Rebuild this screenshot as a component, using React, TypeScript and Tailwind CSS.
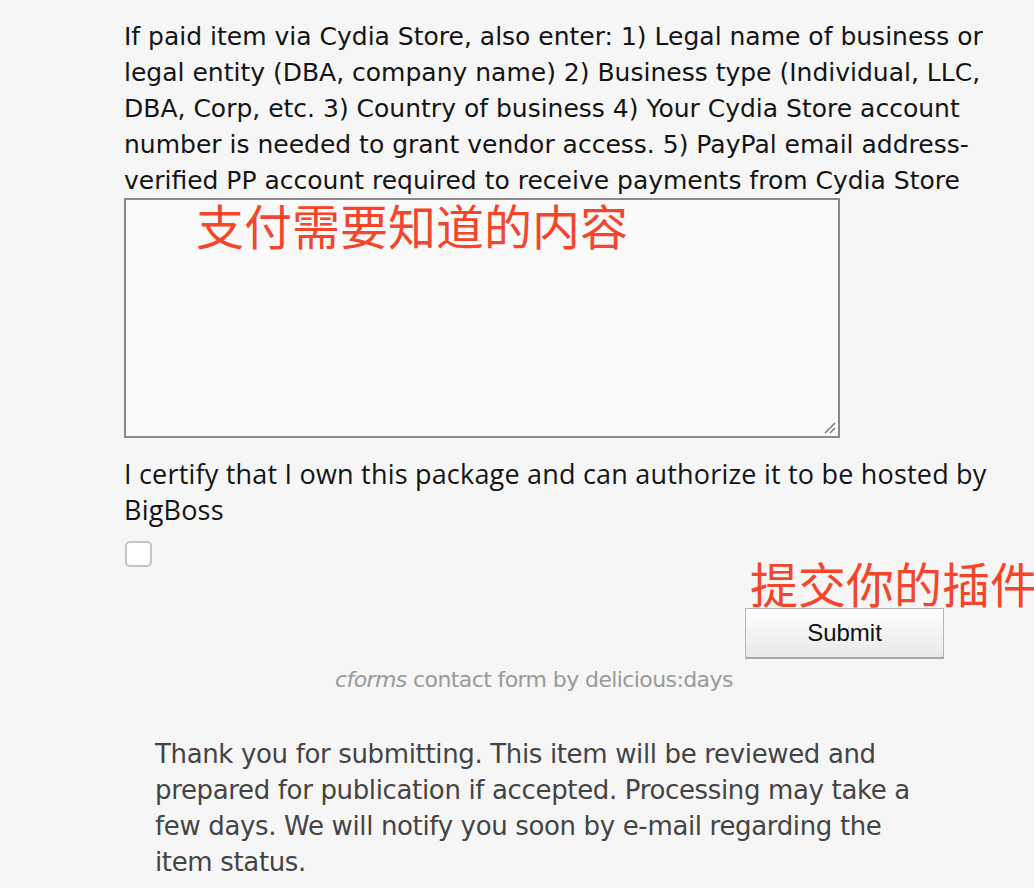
import React from "react";

export default function App() {
  return (
    <div className="min-h-[888px] w-[1034px] overflow-hidden bg-[#f6f6f6]">
      <div className="pl-[124px] pt-[19px]">
        <p className="whitespace-nowrap font-['DejaVu_Sans',sans-serif] text-[25px] leading-[36px] tracking-[0px] text-[#141414]">
          If paid item via Cydia Store, also enter: 1) Legal name of business or
          <br />
          legal entity (DBA, company name) 2) Business type (Individual, LLC,
          <br />
          DBA, Corp, etc. 3) Country of business 4) Your Cydia Store account
          <br />
          number is needed to grant vendor access. 5) PayPal email address-
          <br />
          verified PP account required to receive payments from Cydia Store
        </p>
        <div className="relative mt-[-1px] h-[240px] w-[716px] border-2 border-[#8a8a8a] bg-[#fafafa]">
          <span className="absolute left-[70px] top-[0px] whitespace-nowrap font-['Noto_Sans_CJK_SC',sans-serif] text-[48px] leading-[48px] text-[#f5452a]">
            支付需要知道的内容
          </span>
          <svg className="absolute bottom-[2px] right-[2px]" width="14" height="14" viewBox="0 0 14 14">
            <line x1="3" y1="13" x2="13" y2="3" stroke="#777" strokeWidth="1.5" />
            <line x1="8" y1="13" x2="13" y2="8" stroke="#777" strokeWidth="1.5" />
          </svg>
        </div>
        <p className="mt-[18px] whitespace-nowrap font-['Open_Sans',sans-serif] text-[27px] leading-[36px] tracking-[0.2px] text-[#141414]">
          I certify that I own this package and can authorize it to be hosted by
          <br />
          BigBoss
        </p>
        <div className="ml-[1px] mt-[13px] h-[26px] w-[27px] rounded-[5px] border-2 border-[#c4c4c4] bg-white" />
        <div className="ml-[626px] mt-[-11px] h-[52px] whitespace-nowrap font-['Noto_Sans_CJK_SC',sans-serif] text-[48px] leading-[52px] text-[#f5452a]">
          提交你的插件
        </div>
        <button className="ml-[621px] flex h-[51px] w-[199px] items-center justify-center border border-[#b5b5b5] border-b-[2px] border-b-[#a8a8a8] bg-gradient-to-b from-[#fefefe] to-[#e9e9e9] font-['Liberation_Sans',sans-serif] text-[24px] text-[#111]">
          Submit
        </button>
        <div className="ml-[211px] mt-[6px] whitespace-nowrap font-['DejaVu_Sans',sans-serif] text-[22px] leading-[30px] tracking-[-0.6px] text-[#9a9a9a]">
          <i>cforms</i> contact form by delicious:days
        </div>
        <p className="ml-[31px] mt-[41px] whitespace-nowrap font-['DejaVu_Sans',sans-serif] text-[26px] leading-[36px] tracking-[-0.35px] text-[#444]">
          Thank you for submitting. This item will be reviewed and
          <br />
          prepared for publication if accepted. Processing may take a
          <br />
          few days. We will notify you soon by e-mail regarding the
          <br />
          item status.
        </p>
      </div>
    </div>
  );
}
